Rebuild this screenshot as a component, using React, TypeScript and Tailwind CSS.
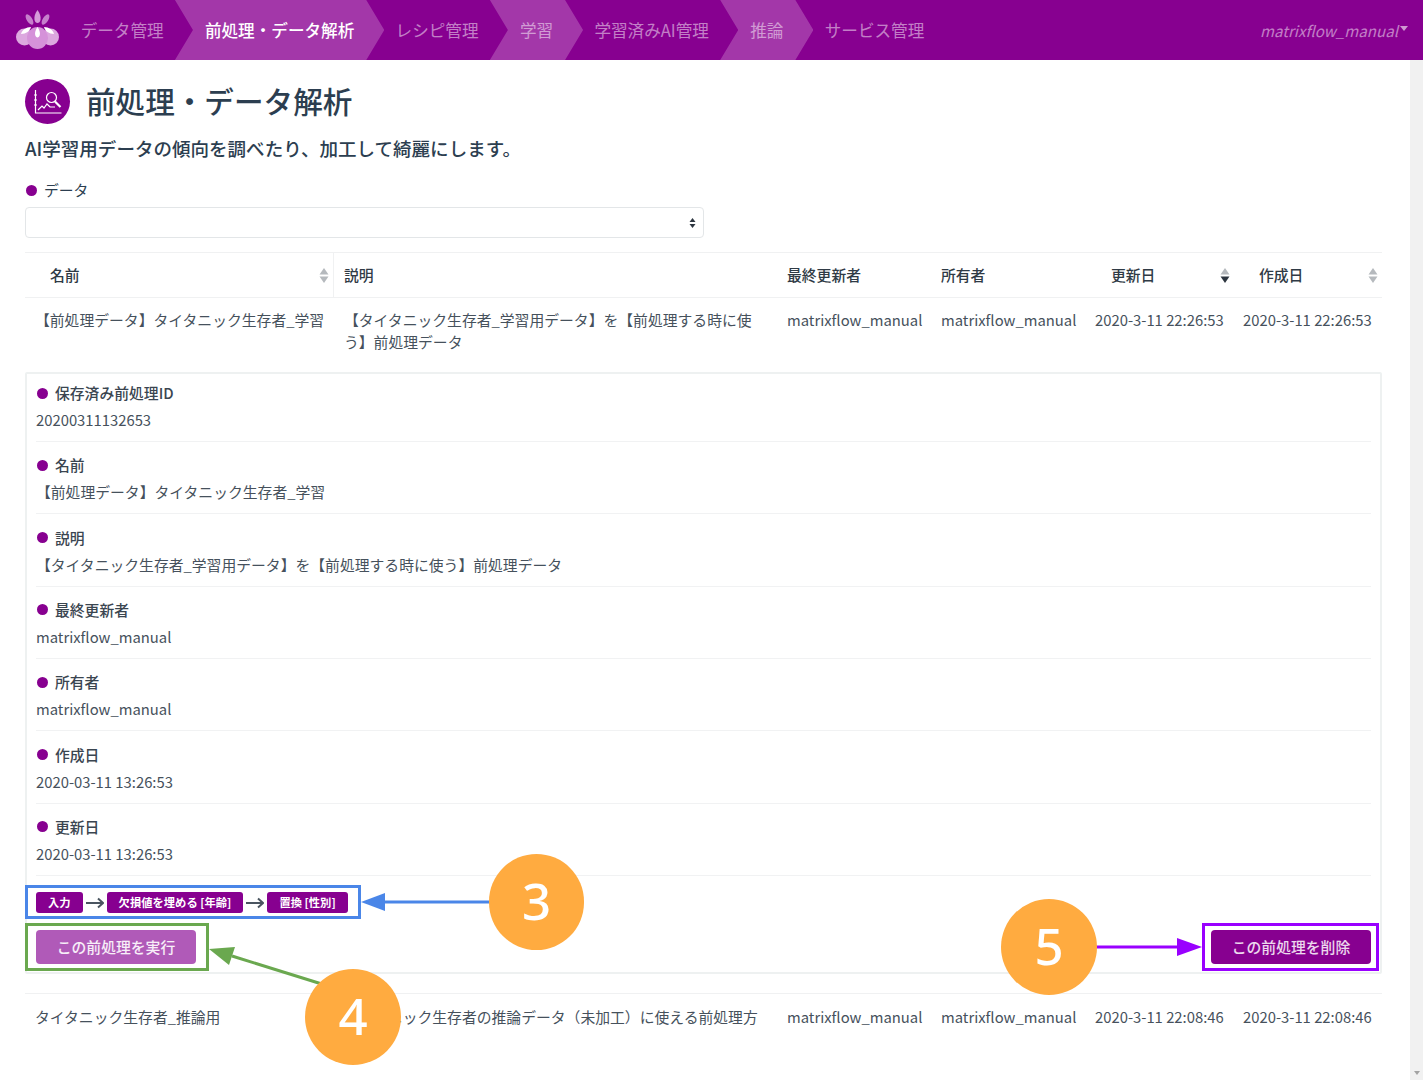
import React from "react";

const navItems = [
  { label: "データ管理" },
  { label: "前処理・データ解析", active: true },
  { label: "レシピ管理" },
  { label: "学習", soft: true },
  { label: "学習済みAI管理" },
  { label: "推論", soft: true },
  { label: "サービス管理" },
];

const details = [
  { label: "保存済み前処理ID", value: "20200311132653" },
  { label: "名前", value: "【前処理データ】タイタニック生存者_学習" },
  { label: "説明", value: "【タイタニック生存者_学習用データ】を【前処理する時に使う】前処理データ" },
  { label: "最終更新者", value: "matrixflow_manual" },
  { label: "所有者", value: "matrixflow_manual" },
  { label: "作成日", value: "2020-03-11 13:26:53" },
  { label: "更新日", value: "2020-03-11 13:26:53" },
];

const gridCols = "grid grid-cols-[309px_443px_154px_154px_148px_149px]";

const Logo = () => (
  <svg width="46" height="40" viewBox="0 0 46 40" className="shrink-0">
    <path d="M22.5 0c2.5 3 3.5 7 3 10c-.4 2-1.6 3-3 3s-2.600-1-3-3c-.5-3 .5-7 3-10z" fill="#d59ad9" />
    <ellipse cx="14.5" cy="9.500" rx="2.700" ry="6" fill="#c67fcc" transform="rotate(-32 14.500 9.500)" />
    <ellipse cx="30.500" cy="9.500" rx="2.700" ry="6" fill="#c67fcc" transform="rotate(32 30.500 9.500)" />
    <ellipse cx="9.500" cy="27" rx="8.500" ry="8.500" fill="#dca8df" />
    <ellipse cx="35.500" cy="27" rx="8.500" ry="8.500" fill="#dca8df" />
    <path d="M6 24c1-4 5-7 10-7c-1 4-5 7-10 7z" fill="#fff" />
    <path d="M39 24c-1-4-5-7-10-7c1 4 5 7 10 7z" fill="#fff" />
    <ellipse cx="22.500" cy="28" rx="10.500" ry="11" fill="#d592d9" />
    <path d="M22.500 17c2.200 3 2.800 6 2.300 8c-.3 1.500-1.200 2.500-2.300 2.500s-2-1-2.300-2.500c-.5-2 .1-5 2.300-8z" fill="#fff" />
  </svg>
);

const ChartIcon = () => (
  <div className="w-[45px] h-[45px] rounded-full bg-[#870090] flex items-center justify-center shrink-0">
    <svg width="30" height="26" viewBox="0 0 30 26" fill="none" stroke="#fff" strokeWidth="1.2">
      <path d="M2.500 1v23h26" />
      <path d="M1 6h3M1 11h3M1 16h3" />
      <path d="M5 21l4-4l2 2l3-4l3 3l5 0" />
      <circle cx="18.500" cy="8.500" r="5" />
      <path d="M22 12.500l5.500 5.500" strokeWidth="2.200" />
    </svg>
  </div>
);

const SortIcon = ({ active = false }: { active?: boolean }) => (
  <svg width="10" height="15" viewBox="0 0 10 15" className="shrink-0">
    <path d="M5 0l4.500 6.500h-9z" fill="#b5b9bd" />
    <path d="M5 15l4.500-6.500h-9z" fill={active ? "#2d3640" : "#b5b9bd"} />
  </svg>
);

const Bullet = ({ className = "" }: { className?: string }) => (
  <span className={`w-[11px] h-[11px] rounded-full bg-[#870090] shrink-0 ${className}`} />
);

const Tag = ({ children }: { children: React.ReactNode }) => (
  <span className="h-[21px] px-[12px] rounded-[3px] bg-[#870090] text-white text-[11.3px] font-bold leading-[21px] whitespace-nowrap">
    {children}
  </span>
);

const TagArrow = () => (
  <svg width="18" height="12" viewBox="0 0 18 12" fill="none" stroke="#4a5560" strokeWidth="2" className="mx-[3px] shrink-0">
    <path d="M0 6h17M12 1.500l5 4.500l-5 4.500" />
  </svg>
);

const Annotations = () => (
  <div className="absolute inset-0 pointer-events-none">
    <div className="absolute left-[25px] top-[885px] w-[336px] h-[34px] border-[3px] border-[#4a86e8]" />
    <div className="absolute left-[25px] top-[923px] w-[184px] h-[48px] border-[3px] border-[#6aa84f]" />
    <div className="absolute left-[1202px] top-[923px] w-[177px] h-[48px] border-[3px] border-[#9900ff]" />
    <svg width="1423" height="1080" className="absolute left-0 top-0">
      <path d="M385 902H492" stroke="#4a86e8" strokeWidth="3" />
      <path d="M361 902l24-9v18z" fill="#4a86e8" />
      <path d="M232 956L325 985" stroke="#6aa84f" strokeWidth="3" />
      <path d="M209 949l26-2l-6 18z" fill="#6aa84f" />
      <path d="M1095 947H1180" stroke="#9900ff" strokeWidth="3" />
      <path d="M1202 947l-25-9v18z" fill="#9900ff" />
    </svg>
    <div className="absolute left-[489px] top-[854px] w-[95px] h-[96px] pb-[3px] rounded-full bg-[#ffab40] flex items-center justify-center text-white text-[51px] font-medium leading-none font-['Noto_Sans',sans-serif]">3</div>
    <div className="absolute left-[305px] top-[969px] w-[96px] h-[96px] pb-[3px] rounded-full bg-[#ffab40] flex items-center justify-center text-white text-[51px] font-medium leading-none font-['Noto_Sans',sans-serif]">4</div>
    <div className="absolute left-[1001px] top-[899px] w-[96px] h-[96px] pb-[3px] rounded-full bg-[#ffab40] flex items-center justify-center text-white text-[51px] font-medium leading-none font-['Noto_Sans',sans-serif]">5</div>
  </div>
);

const App = () => {
  return (
    <div className="relative w-[1423px] h-[1080px] overflow-hidden bg-white text-[14.82px] leading-[22px] text-[#46515c] font-['Noto_Sans_CJK_JP','Noto_Sans',sans-serif]">
      <nav className="h-[60px] bg-[#870090] flex items-center overflow-hidden">
        <div className="pl-[15px] w-[60px] shrink-0">
          <Logo />
        </div>
        {navItems.map((item) => (
          <a
            key={item.label}
            className={`h-full flex items-center px-[30px] -mx-[9.35px] text-[16.6px] whitespace-nowrap ${
              item.active
                ? "bg-[#a337a9] text-white font-medium [clip-path:polygon(0_0,calc(100%-18px)_0,100%_50%,calc(100%-18px)_100%,0_100%,18px_50%)]"
                : item.soft
                  ? "bg-[#a337a9] text-white/50 [clip-path:polygon(0_0,calc(100%-18px)_0,100%_50%,calc(100%-18px)_100%,0_100%,18px_50%)]"
                  : "text-white/50"
            }`}
          >
            {item.label}
          </a>
        ))}
        <div className="ml-auto pr-[15px] flex items-center gap-[2px] text-[15.1px] text-white/50 italic">
          matrixflow_manual
          <span className="w-0 h-0 border-x-[4.500px] border-x-transparent border-t-[5px] border-t-white/60 -mt-[3px]" />
        </div>
      </nav>

      <div className="flex h-[1020px]">
        <main className="flex-1 min-w-0 pl-[25px] pr-[28px] pt-[19px]">
          <div className="flex items-center gap-[16px]">
            <ChartIcon />
            <h1 className="text-[29.6px] leading-[43px] pb-[2px] font-medium text-[#2c3e50]">前処理・データ解析</h1>
          </div>
          <p className="mt-[11px] text-[18.55px] leading-[26px] font-medium text-[#2c3e50]">
            AI学習用データの傾向を調べたり、加工して綺麗にします。
          </p>

          <div className="mt-[18px] flex items-center h-[22px] text-[#2c3e50]">
            <Bullet className="ml-[1px] mr-[7px]" />
            データ
          </div>
          <div className="mt-[6px] w-[679px] h-[31px] border border-[#e3e6e8] rounded-[4px] flex items-center justify-end pr-[7px]">
            <svg width="7" height="10" viewBox="0 0 7 10">
              <path d="M3.500 0l3 4h-6zM3.500 10l3-4h-6z" fill="#2d3640" />
            </svg>
          </div>

          <div className={`mt-[14px] h-[46px] border-y border-[#f0f1f2] font-medium text-[#2f3a45] ${gridCols}`}>
            <div className="pl-[25px] pr-[4px] flex items-center justify-between border-r border-[#f0f1f2]">
              名前
              <SortIcon />
            </div>
            <div className="pl-[10px] flex items-center">説明</div>
            <div className="pl-[10px] flex items-center">最終更新者</div>
            <div className="pl-[10px] flex items-center">所有者</div>
            <div className="pl-[26px] pr-[3px] flex items-center justify-between">
              更新日
              <SortIcon active />
            </div>
            <div className="pl-[26px] pr-[4px] flex items-center justify-between">
              作成日
              <SortIcon />
            </div>
          </div>

          <div className={`pt-[11px] pb-[11px] ${gridCols}`}>
            <div className="px-[10px] whitespace-nowrap">【前処理データ】タイタニック生存者_学習</div>
            <div className="px-[10px]">【タイタニック生存者_学習用データ】を【前処理する時に使う】前処理データ</div>
            <div className="px-[10px]">matrixflow_manual</div>
            <div className="px-[10px]">matrixflow_manual</div>
            <div className="px-[10px] whitespace-nowrap">2020-3-11 22:26:53</div>
            <div className="px-[10px] whitespace-nowrap">2020-3-11 22:26:53</div>
          </div>

          <section className="mt-[8px] border-2 border-[#eef1f1] rounded-[2px] px-[9px] pt-[8px] pb-[8px]">
            {details.map((d) => (
              <div key={d.label} className="mb-[12.33px] pb-[10px] border-b border-[#f1f2f3]">
                <div className="flex items-center h-[22px] font-medium text-[#3a4550]">
                  <Bullet className="ml-[1px] mr-[7px]" />
                  {d.label}
                </div>
                <div className="mt-[5px]">{d.value}</div>
              </div>
            ))}
            <div className="flex items-center pt-[4px] -mt-[0.3px]">
              <Tag>入力</Tag>
              <TagArrow />
              <Tag>欠損値を埋める [年齢]</Tag>
              <TagArrow />
              <Tag>置換 [性別]</Tag>
            </div>
            <div className="mt-[17px] flex justify-between">
              <button className="h-[34px] w-[160px] rounded-[4px] bg-[#b05ab8] text-white/90 font-medium">この前処理を実行</button>
              <button className="h-[34px] w-[160px] rounded-[4px] bg-[#870090] text-white/85 font-medium">この前処理を削除</button>
            </div>
          </section>

          <div className={`mt-[19px] pt-[12px] border-t border-[#f0f1f2] ${gridCols}`}>
            <div className="px-[10px]">タイタニック生存者_推論用</div>
            <div className="px-[10px]">タイタニック生存者の推論データ（未加工）に使える前処理方法</div>
            <div className="px-[10px]">matrixflow_manual</div>
            <div className="px-[10px]">matrixflow_manual</div>
            <div className="px-[10px] whitespace-nowrap">2020-3-11 22:08:46</div>
            <div className="px-[10px] whitespace-nowrap">2020-3-11 22:08:46</div>
          </div>
        </main>

        <aside className="w-[13px] shrink-0 bg-[#f1f1f1] flex flex-col justify-end items-center pb-[5px]">
          <span className="w-0 h-0 border-x-[3px] border-x-transparent border-t-[4px] border-t-[#a3a3a3]" />
        </aside>
      </div>

      <Annotations />
    </div>
  );
};

export default App;
